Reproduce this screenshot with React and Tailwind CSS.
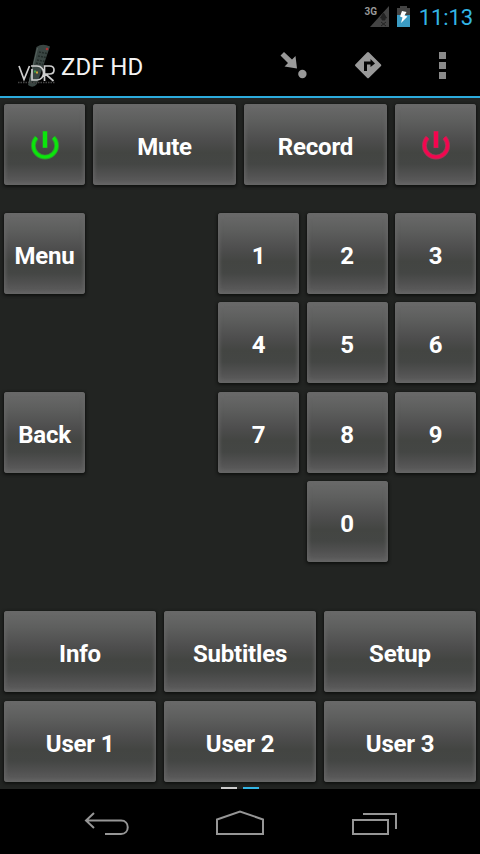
import React from 'react';

function Key({ children, className = 'w-[81px]', label }) {
  return (
    <button
      aria-label={label}
      className={`flex h-[81px] shrink-0 items-center justify-center rounded-[3px] bg-[linear-gradient(180deg,#6a6a6a_0%,#5e5f5e_20%,#4d4d4d_45%,#434542_60%,#444644_74%,#525252_88%,#606060_100%)] pt-[5px] font-['Roboto',sans-serif] text-[24px] leading-none font-bold tracking-[-0.2px] text-white shadow-[0_1px_3px_1px_#101210,inset_0_0_4px_1px_#686868] ${className}`}
    >
      {children}
    </button>
  );
}

function Power({ color, edge }) {
  return (
    <svg className="mb-[4px] ml-[1px]" width="30" height="30" viewBox="0 0 30 30" fill="none">
      <path d="M6.600 7.500a11.600 11.600 0 1 0 16.800 0" stroke={edge} strokeWidth="4.800" />
      <path d="M6.600 7.500a11.600 11.600 0 1 0 16.800 0" stroke={color} strokeWidth="3" />
      <path d="M15 1v17" stroke={edge} strokeWidth="5" />
      <path d="M15 1.500v16" stroke={color} strokeWidth="4" />
    </svg>
  );
}

function StatusBar() {
  return (
    <div className="flex h-[34px] items-start justify-end bg-black pr-[7px]">
      <svg className="mt-[3px] mr-[8px]" width="26" height="26" viewBox="0 0 26 26">
        <path d="M26 3v21H7z" fill="#444" />
        <path d="M20.500 10l-3 5h1.500v2h3v-2H23.500zM18 19l5 4m0-4l-5 4" fill="#222" stroke="#222" strokeWidth="1" />
        <text x="1.500" y="12" fill="#999" fontFamily="Roboto, sans-serif" fontWeight="700" fontSize="11" textLength="12.500" lengthAdjust="spacingAndGlyphs">3G</text>
      </svg>
      <svg className="mt-[6px] mr-[9px]" width="13" height="21" viewBox="0 0 13 21">
        <path d="M0 2h3V0h7v2h3v8H0z" fill="#444" />
        <path d="M0 9h13v12H0z" fill="#3b9cc4" />
        <path d="M5 5L9.500 6 7.500 9.500 10.500 10.500 4 17 5.500 11.500 3 10.500z" fill="#fff" />
      </svg>
      <span className="mt-[5px] font-['Roboto',sans-serif] text-[22px] leading-[26px] tracking-[-0.1px] text-[#33b5e5]">11:13</span>
    </div>
  );
}

function Logo() {
  return (
    <svg width="42" height="48" viewBox="0 0 42 48">
      <path d="M18.500 6q6-4 13.500-.5L19 43q-4 5-9 1z" fill="#3a4643" />
      <path d="M19.500 7L11 42" stroke="#56625e" />
      <path d="M21 11l8 1.500M20 15l8 1.500M19 19l8 1.500M18 22l7 1.500M14 41l4 1" stroke="#222b28" strokeWidth="1.500" strokeDasharray="2 1" />
      <circle cx="29" cy="8" r="1.300" fill="#a33" />
      <path d="M1 25l5 13.500L11.500 25M13 25h6c9 0 8.500 14 0 14h-5V28M26.500 40V25h5c6 0 6 8 0 8h-4l8 7" fill="none" stroke="#cdcdcd" strokeWidth="1.700" />
      <path d="M0 41.500h37" stroke="#444" strokeWidth="1.500" strokeDasharray="1.500 1" />
      <path d="M16 30.500h2" stroke="#3aa04a" strokeWidth="2" />
      <path d="M18 31.500h2" stroke="#d4a531" strokeWidth="2" />
    </svg>
  );
}

function ActionBar() {
  return (
    <header className="flex h-[62px] items-center bg-black pl-[18px]">
      <Logo />
      <h1 className="mt-[3px] ml-[1px] font-['Roboto',sans-serif] text-[24px] leading-none font-normal text-[#f3f3f3]">ZDF HD</h1>
      <svg className="ml-auto" width="200" height="62" viewBox="280 34 200 62" fill="#999">
        <path d="M280.500 55.500l3.500-3.500 8 7.500 3.500-3.500 1.500 12.500-12.500-2 3.500-3.500z" />
        <circle cx="302.400" cy="74" r="4.200" />
        <path d="M367 52.500q1-1 2 0L381 64.500q.7.7 0 1.500L369 77.800q-1 1-2 0L355.300 66q-.7-.8 0-1.500z" />
        <path d="M365.500 71v-8h6.500" fill="none" stroke="#050505" strokeWidth="3" />
        <path d="M370.500 59l4.500 4.500-4.500 3.500z" fill="#050505" />
        <path d="M439 52h7v7h-7zM439 62h7v7h-7zM439 72h7v7h-7z" fill="#8a8a8a" />
      </svg>
    </header>
  );
}

function NavBar() {
  return (
    <nav className="h-[65px] bg-black">
      <svg width="480" height="65" viewBox="0 789 480 65" fill="none" stroke="#969696" strokeWidth="2">
        <path d="M94 813l-8 7.500 8 7.500M87 820.500h34c9 0 9 13.500 0 13.500h-16" />
        <path d="M217 834v-14.500l23-8 23 8V834z" />
        <path d="M353 820h35v14h-35zM363 814h33v15" />
      </svg>
    </nav>
  );
}

export default function App() {
  return (
    <div className="flex h-[854px] w-[480px] flex-col overflow-hidden bg-[#222422]">
      <StatusBar />
      <ActionBar />
      <div className="h-[2px] shrink-0 bg-[#2cabdd]" />
      <main className="flex h-[691px] flex-col px-[4px] pt-[6px]">
        <div className="flex justify-between">
          <Key label="Power on"><Power color="#0be60b" edge="#2f9a2f" /></Key>
          <Key className="w-[143px]">Mute</Key>
          <Key className="w-[143px]">Record</Key>
          <Key label="Power off"><Power color="#f5054f" edge="#a83455" /></Key>
        </div>
        <div className="mt-[28px] flex justify-between">
          <div className="flex flex-col gap-[97.500px]">
            <Key>Menu</Key>
            <Key>Back</Key>
          </div>
          <div className="grid grid-cols-[81px_81px_81px] gap-x-[7.500px] gap-y-[8.400px]">
            {[1, 2, 3, 4, 5, 6, 7, 8, 9].map((n) => <Key key={n}>{n}</Key>)}
            <Key className="col-start-2 w-[81px]">0</Key>
          </div>
        </div>
        <div className="mt-[49px] grid grid-cols-3 gap-x-2 gap-y-[8.500px]">
          {['Info', 'Subtitles', 'Setup', 'User 1', 'User 2', 'User 3'].map((t) => (
            <Key key={t} className="w-full">{t}</Key>
          ))}
        </div>
        <div className="mt-auto flex justify-center gap-[6px]">
          <i className="h-[2px] w-[16px] bg-[#ccc]" />
          <i className="h-[2px] w-[16px] bg-[#33b5e5]" />
        </div>
      </main>
      <NavBar />
    </div>
  );
}
